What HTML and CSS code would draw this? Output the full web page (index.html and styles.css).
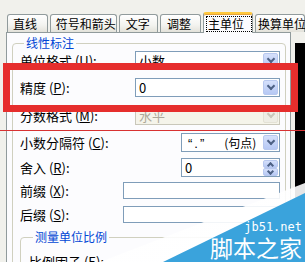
FILE: index.html
```html
<!DOCTYPE html>
<html lang="zh-CN">
<head>
    <meta charset="UTF-8">
    <title>修改标注样式 - 主单位</title>
    <link rel="stylesheet" href="styles.css">
</head>
<body>
    <div class="screen">
        <div class="tabs">
            <div class="tab tab-line">直线</div>
            <div class="tab tab-arrow">符号和箭头</div>
            <div class="tab tab-text">文字</div>
            <div class="tab tab-fit">调整</div>
            <div class="tab tab-primary active"><span class="focus">主单位</span></div>
            <div class="tab tab-alt">换算单位</div>
        </div>

        <div class="stage">
            <div class="panel">
                <fieldset class="group">
                    <legend>线性标注</legend>
                    <div class="form">
                        <label>单位格式 (<u>U</u>):</label>
                        <div class="select wide"><span>小数</span><i class="drop"></i></div>

                        <label>精度 (<u>P</u>):</label>
                        <div class="select wide"><span>0</span><i class="drop"></i></div>

                        <label>分数格式 (<u>M</u>):</label>
                        <div class="select wide disabled"><span>水平</span><i class="drop"></i></div>

                        <label>小数分隔符 (<u>C</u>):</label>
                        <div class="select narrow"><span class="quote">“.”</span><span class="sep">(句点)</span><i class="drop"></i></div>

                        <label>舍入 (<u>R</u>):</label>
                        <div class="spin narrow"><span>0</span><i class="up"></i><i class="down"></i></div>

                        <label>前缀 (<u>X</u>):</label>
                        <div class="field long"></div>

                        <label>后缀 (<u>S</u>):</label>
                        <div class="field long"></div>
                    </div>

                    <fieldset class="group sub">
                        <legend>测量单位比例</legend>
                        <div class="form">
                            <label>比例因子 (<u>E</u>):</label>
                        </div>
                    </fieldset>
                </fieldset>
            </div>
            <div class="backdrop"></div>
        </div>

        <div class="mark-box"></div>
        <div class="mark-line"></div>

        <div class="watermark">
            <div class="wm-fade"></div>
            <div class="wm-blue"></div>
            <div class="wm-text">
                <span class="wm-url">jb51.net</span>
                <span class="wm-name">脚本之家</span>
            </div>
        </div>
    </div>
</body>
</html>
```

FILE: styles.css
```css
body {
    margin: 0;
    font-family: "Noto Sans CJK SC", "DejaVu Sans", sans-serif;
    color: #000;
}
.screen {
    position: relative;
    width: 305px;
    height: 262px;
    overflow: hidden;
    background-color: #f1f1ec;
}
.tabs {
    display: flex;
    align-items: flex-end;
    gap: 2px;
    height: 33px;
    padding-left: 7px;
    box-sizing: border-box;
    position: relative;
    z-index: 2;
}
.tab {
    height: 18px;
    box-sizing: border-box;
    border: 1px solid #919b9c;
    border-bottom: none;
    border-radius: 3px 3px 0 0;
    background: linear-gradient(#ffffff, #f3f3ef 60%, #e3e2da);
    font-size: 12px;
    line-height: 17px;
    padding-left: 5px;
    white-space: nowrap;
    margin-bottom: 1px;
}
.tab-line { width: 47px; }
.tab-arrow { width: 69px; }
.tab-text { width: 45px; padding-left: 6px; }
.tab-fit { width: 47px; padding-left: 6px; }
.tab-alt { width: 50px; padding-left: 2px; }
.tab.active {
    width: 51px;
    height: 21px;
    margin-bottom: 0;
    padding: 2px 0 0 2px;
    background: #fcfcfe;
    border-top: 2px solid #ffc83c;
    box-shadow: inset 0 1px 0 #e6a23a;
}
.focus {
    display: block;
    width: 46px;
    height: 16px;
    line-height: 15px;
    box-sizing: border-box;
    padding-left: 2px;
    outline: 1px dotted #000;
    outline-offset: -1px;
}
.stage {
    display: flex;
    margin-top: -1px;
}
.panel {
    width: 285px;
    height: 232px;
    margin-left: 6px;
    box-sizing: border-box;
    border: 1px solid #919b9c;
    border-bottom: none;
    background-color: #fcfcfe;
    padding: 3px 0 0 5px;
}
.backdrop {
    width: 10px;
    margin: 11px 0 0 4px;
    background-color: #000;
}
.group {
    margin: 0;
    width: 273px;
    box-sizing: border-box;
    border: 1px solid #d0d0bf;
    border-radius: 4px;
    padding: 0 5px 0 7px;
}
.group legend {
    font-size: 12px;
    line-height: 14px;
    color: #0046d5;
    padding: 0 2px;
    margin-left: 4px;
}
.form {
    display: grid;
    grid-template-columns: 1fr auto;
    grid-template-rows: 20px 34px 22px 32px 18px 28px 20px;
    align-items: center;
    font-size: 13px;
}
.form label {
    white-space: nowrap;
}
.select,
.spin,
.field {
    position: relative;
    box-sizing: border-box;
    border: 1px solid #7f9db9;
    background-color: #fff;
    justify-self: end;
}
.select,
.spin {
    height: 19px;
    font-size: 13px;
    line-height: 17px;
    padding-left: 3px;
    white-space: nowrap;
}
.wide { width: 145px; }
.narrow { width: 99px; }
.long { width: 157px; height: 17px; }
.quote {
    font-family: "Liberation Sans", sans-serif;
    padding-left: 3px;
    letter-spacing: 2px;
}
.sep { padding-left: 18px; font-size: 12px; }
.drop,
.up,
.down {
    position: absolute;
    right: 1px;
    width: 15px;
    border-radius: 2px;
    background: linear-gradient(#d5e0fb, #b6c8f4);
    border: 1px solid #b8c8ef;
    box-sizing: border-box;
}
.drop {
    top: 1px;
    height: 15px;
}
.drop::after,
.up::after,
.down::after {
    content: "";
    position: absolute;
    left: 4px;
    width: 4px;
    height: 4px;
    border-right: 2px solid #4d6185;
    border-bottom: 2px solid #4d6185;
}
.drop::after {
    top: 2px;
    transform: rotate(45deg);
}
.up {
    top: 1px;
    height: 8px;
}
.up::after {
    top: 2px;
    transform: rotate(-135deg);
    width: 3px;
    height: 3px;
}
.down {
    top: 9px;
    height: 8px;
}
.down::after {
    top: 0;
    transform: rotate(45deg);
    width: 3px;
    height: 3px;
}
.disabled {
    border-color: #c9c7ba;
    background-color: #f5f4ea;
    color: #aca899;
}
.disabled .drop {
    background: #eeede5;
    border-color: #e3e1d5;
}
.disabled .drop::after {
    border-color: #c9c7ba;
}
.sub {
    width: 260px;
    margin-top: 6px;
    height: 40px;
    padding-left: 8px;
}
.sub .form {
    grid-template-rows: 20px;
    padding-top: 7px;
}
.mark-box {
    position: absolute;
    left: 3px;
    top: 63px;
    width: 295px;
    height: 49px;
    box-sizing: border-box;
    border: 7px solid #e62e2d;
}
.mark-line {
    position: absolute;
    left: 0;
    top: 130px;
    width: 305px;
    height: 1px;
    background-color: #d83232;
}
.watermark {
    position: absolute;
    inset: 0;
    pointer-events: none;
}
.wm-fade {
    position: absolute;
    inset: 0;
    background: linear-gradient(160deg, rgba(255, 255, 255, 0) 62%, rgba(255, 255, 255, 0.9) 75%);
    clip-path: polygon(305px 183px, 305px 194px, 165px 262px, 100px 262px);
}
.wm-blue {
    position: absolute;
    inset: 0;
    background-color: #3aa3dc;
    clip-path: polygon(305px 193px, 305px 262px, 163px 262px);
}
.wm-text {
    position: absolute;
    right: 3px;
    bottom: 3px;
    display: flex;
    flex-direction: column;
    align-items: flex-end;
    color: #fff;
}
.wm-url {
    font-family: "DejaVu Sans Mono", monospace;
    font-size: 12px;
    line-height: 12px;
    margin-bottom: 3px;
}
.wm-name {
    font-size: 23px;
    line-height: 23px;
}
```
